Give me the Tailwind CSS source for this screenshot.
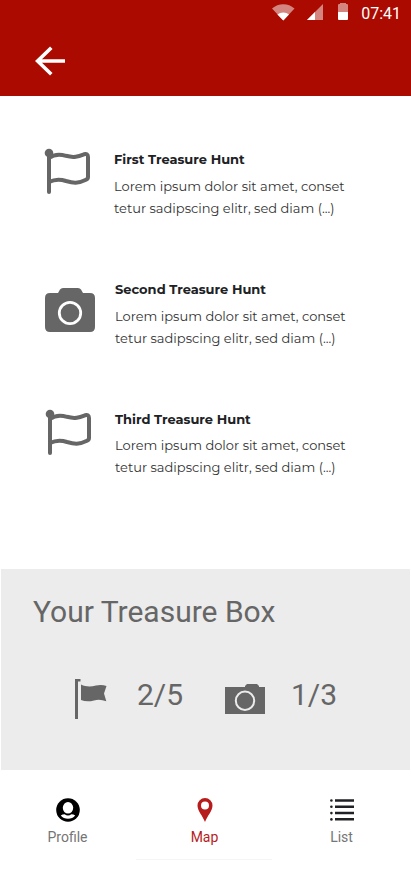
<!DOCTYPE html>
<html lang="en">
<head>
<meta charset="utf-8">
<meta name="viewport" content="width=device-width, initial-scale=1">
<title>Treasure Hunts</title>
<script src="https://cdn.jsdelivr.net/npm/@tailwindcss/browser@4"></script>
</head>
<body class="h-[869px] w-[411px] overflow-hidden bg-white font-['Roboto',sans-serif]">
<div class="flex h-full flex-col">
  <header class="h-24 shrink-0 bg-[#ab0a00] text-white">
    <div class="flex h-[26px] items-center justify-end pr-[10px]">
      <svg class="mr-3 h-[26px] w-[23px]" viewBox="0 0 23 26" fill="#fff"><path opacity=".5" d="M0 8.600Q5 4.300 11.300 4.300T22.500 8.600L11.300 20.500z"/><path d="M5.400 14.600Q8 12.600 11.300 12.600T17 14.600L11.300 20.500z"/></svg>
      <svg class="mr-[14px] h-[26px] w-[17px]" viewBox="0 0 17 26" fill="#fff"><path opacity=".5" d="M0 20L16 4V20z"/><path d="M0 20L8 12V20z"/></svg>
      <svg class="mr-[12px] h-[26px] w-[11px]" viewBox="0 0 11 26" fill="#fff"><path opacity=".5" d="M0 5Q0 4 1 4H2V3H8V4H9Q10 4 10 5V12H0z"/><path d="M0 12H10V19Q10 20 9 20H1Q0 20 0 19z"/></svg>
      <span class="pt-px text-base leading-[26px]">07:41</span>
    </div>
    <button class="mt-5 ml-[34px] block" aria-label="Back"><svg class="h-[30px] w-8" viewBox="0 0 32 30" fill="none" stroke="#fff" stroke-width="3.600"><path d="M17.300 1.700L3.600 15L17.300 28.300M3.600 15H31"/></svg></button>
  </header>

  <main class="flex h-[473px] shrink-0 flex-col pt-[52px] font-['Montserrat','Inter',sans-serif] text-[13px] leading-[22px] text-[#333]">
    <article class="flex h-[130px] pl-[44px]">
      <svg class="mr-[22px] h-[48px] w-12 shrink-0" viewBox="0 0 48 48" fill="none" stroke="#666" stroke-width="4" stroke-linecap="round" stroke-linejoin="round"><circle cx="5" cy="5" r="4.300" fill="#666" stroke="none"/><path d="M5 5V44"/><path d="M5 10C10 6.200 16 6 22 7.800C30 10 34 8.600 40 6.300Q44 5.200 44 9V29Q44 30.800 42 31.800C34 35.800 29 35 22 33C16 31 10 31.500 5 34"/></svg>
      <div>
        <h2 class="font-bold text-[#202124]">First Treasure Hunt</h2>
        <p class="mt-[5px] whitespace-nowrap">Lorem ipsum dolor sit amet, conset<br>tetur sadipscing elitr, sed diam (...)</p>
      </div>
    </article>
    <article class="flex h-[130px] pl-[45px]">
      <svg class="mt-[10px] mr-5 h-[44px] w-[50px] shrink-0" viewBox="0 0 50 44"><path fill="#666" d="M5 5H13L15 1.500Q16 0 18 0H33Q35 0 36 1.500L38 5H45Q50 5 50 10V39Q50 44 45 44H5Q0 44 0 39V10Q0 5 5 5z"/><circle cx="25" cy="25" r="10.700" fill="none" stroke="#fff" stroke-width="2.800"/></svg>
      <div>
        <h2 class="font-bold text-[#202124]">Second Treasure Hunt</h2>
        <p class="mt-[5px] whitespace-nowrap">Lorem ipsum dolor sit amet, conset<br>tetur sadipscing elitr, sed diam (...)</p>
      </div>
    </article>
    <article class="flex h-[130px] pl-[45px]">
      <svg class="mt-px mr-[22px] h-[48px] w-12 shrink-0" viewBox="0 0 48 48" fill="none" stroke="#666" stroke-width="4" stroke-linecap="round" stroke-linejoin="round"><circle cx="5" cy="5" r="4.300" fill="#666" stroke="none"/><path d="M5 5V44"/><path d="M5 10C10 6.200 16 6 22 7.800C30 10 34 8.600 40 6.300Q44 5.200 44 9V29Q44 30.800 42 31.800C34 35.800 29 35 22 33C16 31 10 31.500 5 34"/></svg>
      <div>
        <h2 class="font-bold text-[#202124]">Third Treasure Hunt</h2>
        <p class="mt-1 whitespace-nowrap">Lorem ipsum dolor sit amet, conset<br>tetur sadipscing elitr, sed diam (...)</p>
      </div>
    </article>
  </main>

  <section class="mx-px h-[201px] shrink-0 bg-[#ececec] pt-[25px] text-[#666]">
    <h1 class="pl-8 text-[30px] leading-9">Your Treasure Box</h1>
    <div class="mt-[47px] flex items-start pl-[74px] text-[30px] leading-9">
      <svg class="mt-[2px] mr-[30px] h-10 w-8" viewBox="0 0 32 40" fill="#666"><path d="M0 0H5.500V2.500H3V40H0z"/><path d="M6 5.500C11 8 16 7.800 21 6.500Q27 5.500 31.500 7L29 14.500L31.300 22.300Q25 19.800 19 21.400Q12 23.500 6 21z"/></svg>
      <span class="w-[88px]">2/5</span>
      <svg class="mt-[7px] mr-[26px] h-[30px] w-10" viewBox="0 0 40 30"><path fill="#666" d="M0 3H20V2L22 0H32L34 2V3H40V30H0z"/><circle cx="20" cy="16.800" r="9.200" fill="none" stroke="#ececec" stroke-width="2"/></svg>
      <span>1/3</span>
    </div>
  </section>

  <nav class="flex h-[99px] shrink-0 text-center text-sm leading-4 text-[#757575]">
    <a class="flex w-[135px] flex-col items-center pt-7">
      <svg class="h-6 w-6" viewBox="0 0 24 24"><circle cx="12" cy="12" r="11.800" fill="#000"/><ellipse cx="12" cy="9.800" rx="5.200" ry="5.800" fill="#fff"/><path fill="#fff" d="M4.800 17.600Q6.500 16.200 8.600 16.200Q12 18.800 15.400 16.200Q17.500 16.200 19.200 17.600Q16.500 20.800 12 20.800T4.800 17.600z"/></svg>
      <span class="mt-[7px]">Profile</span>
    </a>
    <a class="ml-px flex h-[90px] w-[136px] flex-col items-center border-b border-[#f5f5f5] pt-7 text-[#b71c1c]">
      <svg class="ml-[2px] h-6 w-4" viewBox="0 0 16 24" fill="#b71c1c"><path fill-rule="evenodd" d="M8 0A7.500 7.500 0 0 1 15.500 7.500C15.500 13 10.500 17.500 8 24C5.500 17.500 .5 13 .5 7.500A7.500 7.500 0 0 1 8 0zM8 3.600A4 4 0 1 0 8 11.600A4 4 0 1 0 8 3.600z"/></svg>
      <span class="mt-[7px] ml-px">Map</span>
    </a>
    <a class="flex w-[139px] flex-col items-center pt-7">
      <svg class="ml-px h-6 w-6" viewBox="0 0 24 24" fill="#202124"><path d="M5 1.200H24V3.700H5zM5 7.500H24V10H5zM5 13.800H24V16.300H5zM5 20.100H24V22.600H5z"/><circle cx="1.400" cy="2.500" r="1.300"/><circle cx="1.400" cy="8.800" r="1.300"/><circle cx="1.400" cy="15.100" r="1.300"/><circle cx="1.400" cy="21.400" r="1.300"/></svg>
      <span class="mt-[7px]">List</span>
    </a>
  </nav>
</div>
</body>
</html>
